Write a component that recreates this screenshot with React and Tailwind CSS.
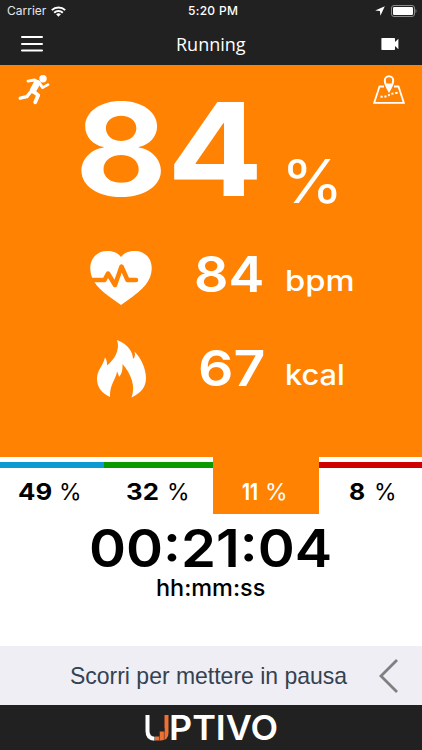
const zones = [
  { value: "49", width: "w-[104px]", bar: "bg-[#0d9ad0]", pad: "pl-[18px]", box: "w-[41px]", stretch: "scale-x-[1.12]" },
  { value: "32", width: "w-[109px]", bar: "bg-[#0a9a00]", pad: "pl-[22px]", box: "w-[41px]", stretch: "scale-x-[1.12]" },
  { value: "11", width: "w-[106px]", active: true, pad: "pl-[29px]", box: "w-[23px]", stretch: "scale-x-[0.8]" },
  { value: "8", width: "w-[103px]", bar: "bg-[#cf0000]", pad: "pl-[30px]", box: "w-[25px]", stretch: "scale-x-[1.08]" },
];

const StatusBar = () => (
  <div className="flex h-[22px] items-center pl-[7px] pr-[5px] text-[12px] leading-none text-white">
    <div className="flex w-[181px] items-center gap-[6px]">
      <span className="w-[38px] text-[12px] text-gray-200">Carrier</span>
      <svg width="15" height="11" viewBox="0 0 15 11" fill="none" stroke="#fff" strokeWidth="2">
        <path d="M.8 4.1a9.6 9.6 0 0 1 13.4 0" />
        <path d="M3.2 6.7a6.2 6.2 0 0 1 8.6 0" />
        <path d="M7.5 10.8 5.1 8.3a3.5 3.5 0 0 1 4.8 0z" fill="#fff" stroke="none" />
      </svg>
    </div>
    <span className="text-[12px] font-medium tracking-[0.3px]">5:20 PM</span>
    <div className="ml-auto flex items-center gap-[6px]">
      <svg width="10" height="10" viewBox="0 0 10 10" fill="#fff">
        <path d="M9.8.2 5.4 9.8 4.9 5.1.2 4.6z" />
      </svg>
      <svg width="26" height="12" viewBox="0 0 26 12">
        <rect x=".5" y=".5" width="23" height="11" rx="2.5" fill="none" stroke="#8b8b8b" />
        <rect x="2" y="2" width="20" height="8" rx="1.2" fill="#fff" />
        <path d="M24.5 4v4c1.3-.6 1.3-3.4 0-4" fill="#8b8b8b" />
      </svg>
    </div>
  </div>
);

const NavBar = () => (
  <div className="flex h-[43px] items-center pl-[21px] pr-[23px]">
    <svg width="22" height="16" viewBox="0 0 22 16" stroke="#fff" strokeWidth="2" strokeLinecap="round">
      <path d="M1 1h20M1 8h20M1 14.6h20" />
    </svg>
    <h1 className="ml-[133px] font-['Open_Sans',sans-serif] text-[18px] font-medium leading-none text-white">
      Running
    </h1>
    <svg className="ml-auto" width="18" height="12" viewBox="0 0 18 12" fill="#fff">
      <path d="M1 0h12.4q.6 0 .6.7V4L17.4.8v10.4L14 8v3.3q0 .7-.6.7H1q-.6 0-.6-.7V.7Q.4 0 1 0" />
    </svg>
  </div>
);

const RunnerIcon = () => (
  <svg width="32" height="30" viewBox="0 0 32 30" fill="none" stroke="#fff" strokeLinecap="round" strokeLinejoin="round">
    <circle cx="25" cy="3.8" r="3.7" fill="#fff" stroke="none" />
    <path d="M10 6.2 16.5 5 21 7.4 24.6 12.6 30 9.6" strokeWidth="2.8" />
    <path d="M19 8.2 15.2 15" strokeWidth="6.6" />
    <path d="M14.8 16 20.2 20.2 17.2 27.2" strokeWidth="3.8" />
    <path d="M12.2 17.5 8.8 21.7 2.2 23.2" strokeWidth="3.4" />
  </svg>
);

const MapIcon = () => (
  <svg width="32" height="30" viewBox="0 0 32 30" fill="none" stroke="#fff">
    <path d="M11 11.5H6.5L1.2 27.8h29.6L25.5 11.5H21" strokeWidth="1.8" />
    <path d="M16 16C13 11 11.8 8.500 11.8 5.500a4.200 4.200 0 0 1 8.400 0C20.200 8.500 19 11 16 16z" strokeWidth="2" />
    <path d="M13.500 9h5L16 15z" fill="#fff" />
    <path d="M7.500 21.500q4 1 8-1.200T25.500 17.600" strokeWidth="2" strokeDasharray="2.2 1.7" />
  </svg>
);

const HeartIcon = () => (
  <svg width="62" height="54" viewBox="0 0 62 54">
    <path d="M31 6C26 0 20.5 0 17 0 7.500 0 .3 7 .3 17c0 14 10.500 22 19.500 29L31 54l11.200-8C51.200 39 61.700 31 61.700 17 61.700 7 54.500 0 45 0c-3.500 0-9 0-14 6" fill="#fff" />
    <path d="M2 29h12.500l3.500-6.500L25 34l6.500-18.500L37.500 29h8.500" fill="none" stroke="#ff8203" strokeWidth="4.500" strokeLinecap="round" strokeLinejoin="round" />
  </svg>
);

const FlameIcon = () => (
  <svg width="50" height="58" viewBox="0 0 50 58" fill="#fff">
    <path d="M20 0C31 4 36 12 36 19c2-2 2.500-4.500 1.500-7.500C44 18 49 29 49 38c0 9-5 15-14.500 19.500C39 46 34 34 25.500 24c.3 6-.7 10-3.500 13-.5-2.500-1-4-2-5.500-1 8-7.500 13-7 25.500C4 53 0 46 0 39c0-9 6-13 8-21.500 1.500 2 2.200 4.500 2 8C17 20 23.500 10 20 0" />
  </svg>
);

const Footer = () => (
  <footer className="flex h-[45px] justify-center bg-[#212121]">
    <div className="flex w-[132px]">
      <svg className="mt-[10px] shrink-0" width="24" height="26" viewBox="0 0 24 26">
        <path d="M2.500 0V16q0 7.500 7 7.800" fill="none" stroke="#fff" strokeWidth="4" />
        <path d="M19.500 0h4v18q0 7.500-8 7.500H10v-4h4.500v-5h5z" fill="#ed7135" />
        <path d="M14.500 16.500v9M19.300 13v12" stroke="#212121" strokeWidth=".5" />
      </svg>
      <span className="origin-left scale-x-[1.04] text-[34.500px] font-semibold leading-[45px] text-white">PTIVO</span>
    </div>
  </footer>
);

export default function App() {
  return (
    <div className="flex h-[750px] w-[422px] flex-col overflow-hidden bg-white font-['Inter',sans-serif]">
      <header className="h-[65px] bg-[#212121]">
        <StatusBar />
        <NavBar />
      </header>

      <main className="h-[392px] bg-[#ff8203] text-white">
        <div className="flex h-[170px] pl-[18px] pr-[17px]">
          <div className="w-[57px] pt-[10px]">
            <RunnerIcon />
          </div>
          <div className="w-[208px] pt-[20px]">
            <span className="inline-block origin-left scale-x-[1.1] text-[129px] font-bold leading-none">84</span>
          </div>
          <div className="w-[50px] pt-[86px]">
            <span className="-ml-[2px] inline-block origin-left scale-x-[1.06] text-[60px] leading-none">%</span>
          </div>
          <div className="ml-auto pt-[10px]">
            <MapIcon />
          </div>
        </div>

        <div className="flex h-[85px] pl-[90px]">
          <div className="w-[104px] pt-[16px]">
            <HeartIcon />
          </div>
          <div className="w-[91px] pt-[15px]">
            <span className="inline-block origin-left scale-x-[1.1] text-[49px] font-semibold leading-none">84</span>
          </div>
          <div className="pt-[31px]">
            <span className="inline-block origin-left scale-x-[1.13] text-[29px] font-medium leading-none">bpm</span>
          </div>
        </div>

        <div className="flex pl-[97px]">
          <div className="w-[101px] pt-[20px]">
            <FlameIcon />
          </div>
          <div className="w-[87px] pt-[24px]">
            <span className="inline-block origin-left scale-x-[1.13] text-[49px] font-semibold leading-none">67</span>
          </div>
          <div className="pt-[40px]">
            <span className="inline-block origin-left scale-x-[1.06] text-[29px] font-medium leading-none">kcal</span>
          </div>
        </div>
      </main>

      <section className="flex h-[57px] text-[23px] leading-none">
        {zones.map((zone) => (
          <div key={zone.value} className={`${zone.width} ${zone.active ? "bg-[#ff8203] text-white" : "pt-[5px] text-black"}`}>
            <div className={zone.active ? "h-[11px]" : `h-[6px] ${zone.bar}`} />
            <div className={`flex pt-[13px] ${zone.pad}`}>
              <div className={zone.box}>
                <span className={`inline-block origin-left font-bold ${zone.stretch}`}>{zone.value}</span>
              </div>
              <span className="inline-block origin-left">%</span>
            </div>
          </div>
        ))}
      </section>

      <section className="flex h-[132px] flex-col items-center text-black">
        <div className="pt-[9px]">
          <span className="block scale-x-[1.08] text-[52px] font-semibold leading-[52px]">00:21:04</span>
        </div>
        <span className="block scale-x-[1.02] text-[23px] font-medium leading-[26px]">hh:mm:ss</span>
      </section>

      <section className="flex h-[59px] items-center bg-[#efeef5] pl-[70px] pr-[24px]">
        <span className="origin-left scale-x-[0.957] whitespace-nowrap font-['Liberation_Sans',sans-serif] text-[24px] leading-none text-[#34424f]">
          Scorri per mettere in pausa
        </span>
        <svg className="ml-auto" width="19" height="34" viewBox="0 0 19 34" fill="none" stroke="#808080" strokeWidth="2.8">
          <path d="M18 1 2 17l16 16" />
        </svg>
      </section>

      <Footer />
    </div>
  );
}
